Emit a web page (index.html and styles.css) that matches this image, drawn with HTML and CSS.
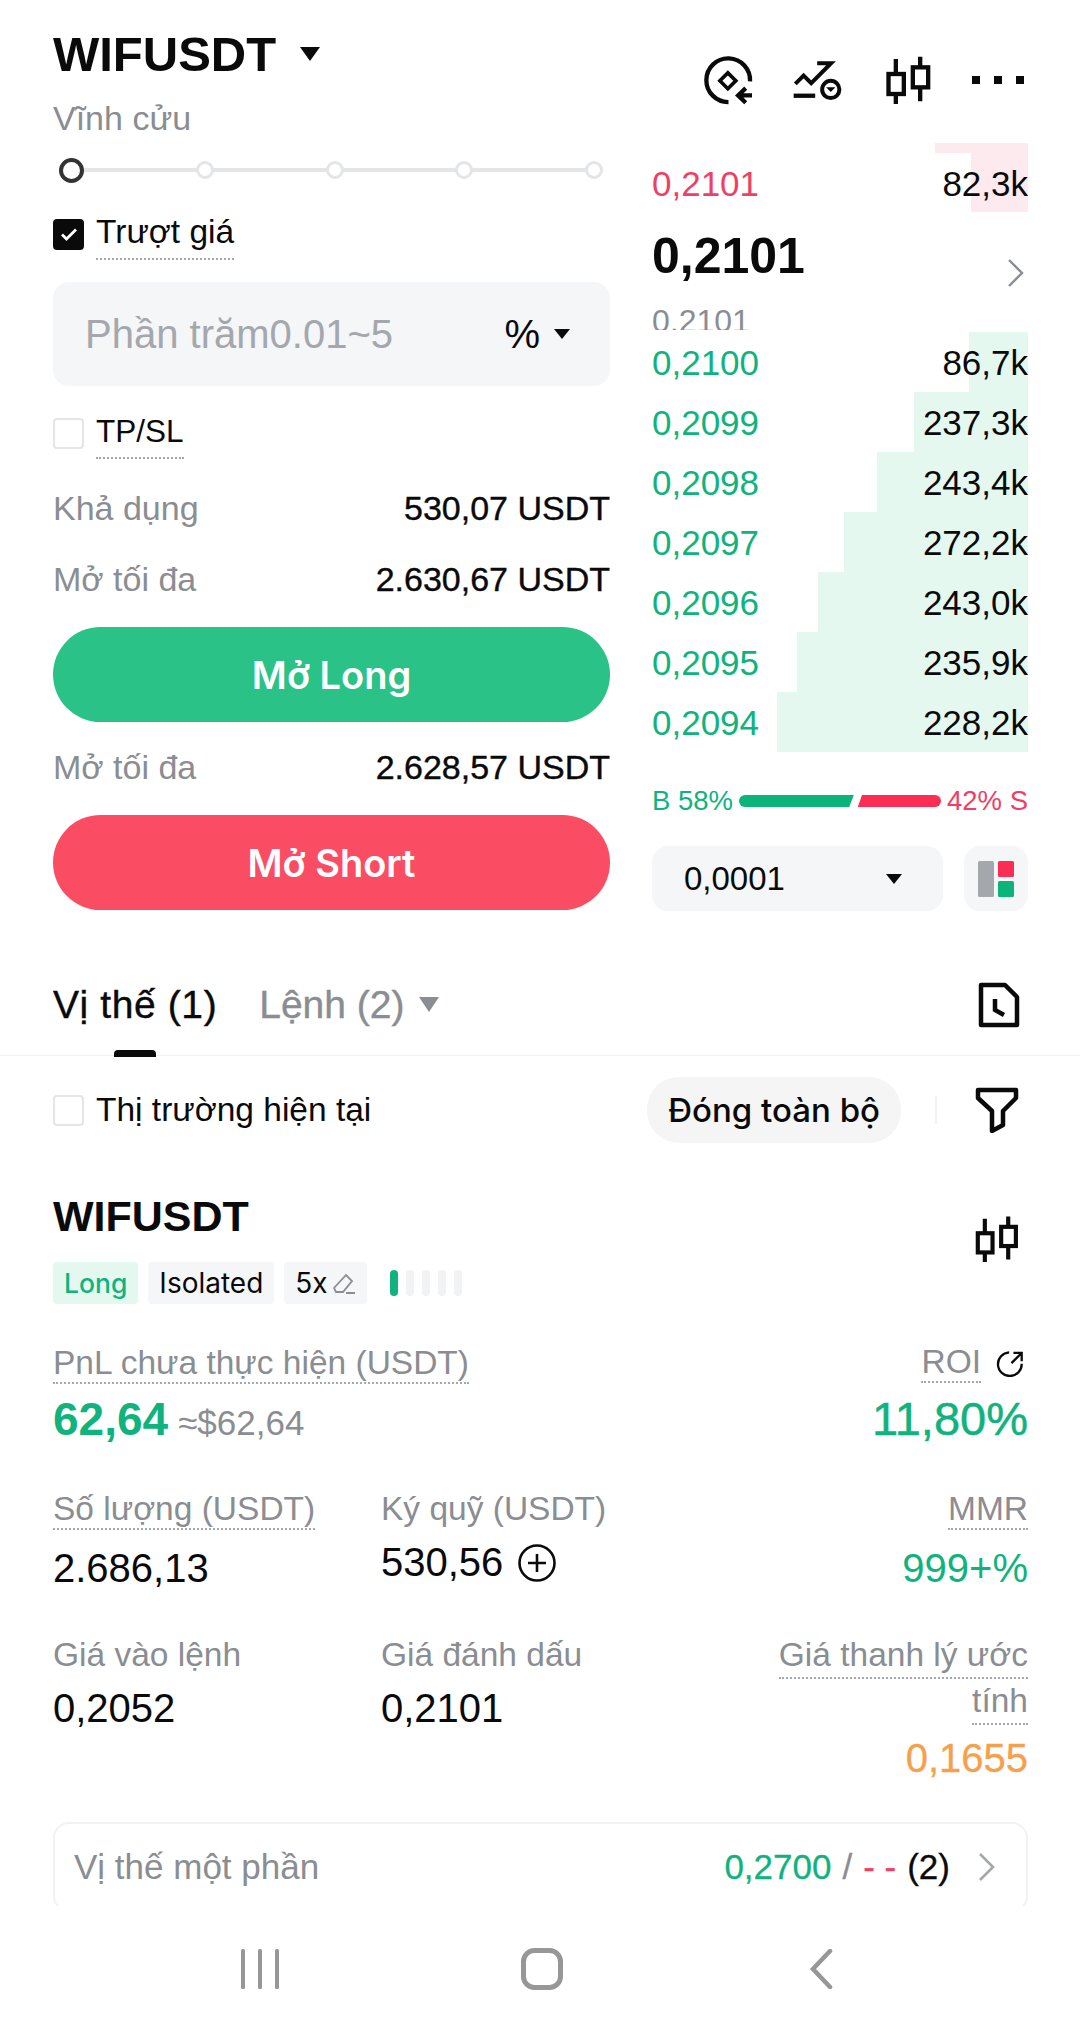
FILE: index.html
```html
<!DOCTYPE html>
<html lang="vi">
<head>
    <meta charset="UTF-8">
    <meta name="viewport" content="width=device-width, initial-scale=1.0">
    <title>WIFUSDT</title>
    <link rel="stylesheet" href="styles.css">
</head>
<body>

<div class="screen">

    <!-- Order form and order book -->
    <div class="trade">
        <div class="form">
            <div class="title-row">
                <span class="title">WIFUSDT</span>
                <span class="caret caret-lg"></span>
            </div>
            <div class="subtitle">Vĩnh cửu</div>

            <div class="slider">
                <span class="knob knob-active"></span>
                <span class="knob"></span>
                <span class="knob"></span>
                <span class="knob"></span>
                <span class="knob"></span>
            </div>

            <div class="check-row check-slip">
                <span class="box box-on">
                    <svg width="18" height="18" viewBox="0 0 18 18"><path d="M2 9.5l4.5 4.5L16 4.5" fill="none" stroke="#fff" stroke-width="2.8"/></svg>
                </span>
                <span class="dotted">Trượt giá</span>
            </div>

            <div class="input">
                <span class="placeholder">Phần trăm0.01~5</span>
                <span class="unit">%</span>
                <span class="caret caret-sm"></span>
            </div>

            <div class="check-row check-tp">
                <span class="box"></span>
                <span class="dotted tp">TP/SL</span>
            </div>

            <div class="info info-first"><span>Khả dụng</span><b>530,07 USDT</b></div>
            <div class="info info-second"><span>Mở tối đa</span><b>2.630,67 USDT</b></div>
            <div class="action action-long">Mở Long</div>
            <div class="info info-third"><span>Mở tối đa</span><b>2.628,57 USDT</b></div>
            <div class="action action-short">Mở Short</div>
        </div>

        <div class="book">
            <div class="tools">
                <svg class="tool" width="57" height="53" viewBox="210 160 170 160" fill="none" stroke="#0a0a0a" stroke-width="13">
                    <path d="M360 243A66 66 0 1 0 295 305"/>
                    <path d="M293 217l24 24-24 24-24-24z" stroke-width="11"/>
                    <path d="M366 285H328M347 263l-23 22 23 22"/>
                </svg>
                <svg class="tool" width="57" height="53" viewBox="485 160 170 160" fill="none" stroke="#0a0a0a" stroke-width="12">
                    <path d="M497 250l25-25 23 23 60-60H563"/>
                    <path d="M492 286h65" stroke-width="13"/>
                    <circle cx="604" cy="267" r="26"/>
                    <path d="M590 260h28l-14 15z" fill="#0a0a0a" stroke="none"/>
                </svg>
                <svg class="tool" width="47" height="50" viewBox="765 165 140 150" fill="none" stroke="#0a0a0a" stroke-width="13">
                    <path d="M797 177v135M870 170v134"/>
                    <rect x="775" y="222" width="46" height="60" fill="#fff"/>
                    <rect x="848" y="202" width="46" height="60" fill="#fff"/>
                </svg>
                <span class="dots"><i></i><i></i><i></i></span>
            </div>

            <div class="asks">
                <span class="ask-cap"></span>
                <div class="row row-ask">
                    <span class="depth depth-ask" style="width:57px"></span>
                    <span class="price ask">0,2101</span><span class="qty">82,3k</span>
                </div>
            </div>

            <div class="last">
                <span class="last-price">0,2101</span>
                <svg width="18" height="30" viewBox="0 0 18 30"><path d="M2 2l13 13L2 28" fill="none" stroke="#8a8d91" stroke-width="2.4"/></svg>
            </div>
            <div class="mark"><span>0,2101</span></div>

            <div class="bids">
                <div class="row"><span class="depth depth-bid" style="width:59px"></span><span class="price bid">0,2100</span><span class="qty">86,7k</span></div>
                <div class="row"><span class="depth depth-bid" style="width:114px"></span><span class="price bid">0,2099</span><span class="qty">237,3k</span></div>
                <div class="row"><span class="depth depth-bid" style="width:151px"></span><span class="price bid">0,2098</span><span class="qty">243,4k</span></div>
                <div class="row"><span class="depth depth-bid" style="width:184px"></span><span class="price bid">0,2097</span><span class="qty">272,2k</span></div>
                <div class="row"><span class="depth depth-bid" style="width:210px"></span><span class="price bid">0,2096</span><span class="qty">243,0k</span></div>
                <div class="row"><span class="depth depth-bid" style="width:231px"></span><span class="price bid">0,2095</span><span class="qty">235,9k</span></div>
                <div class="row"><span class="depth depth-bid" style="width:251px"></span><span class="price bid">0,2094</span><span class="qty">228,2k</span></div>
            </div>

            <div class="ratio">
                <span class="bid">B 58%</span>
                <span class="ratio-bar"><i class="ratio-buy"></i><i class="ratio-sell"></i></span>
                <span class="ask">42% S</span>
            </div>

            <div class="book-controls">
                <div class="step"><span>0,0001</span><span class="caret caret-sm"></span></div>
                <div class="layout-btn">
                    <svg width="36" height="36" viewBox="0 0 36 36">
                        <rect x="0" y="0" width="16" height="36" rx="1.5" fill="#a4a7ab"/>
                        <rect x="20" y="0" width="16" height="16" rx="1.5" fill="#fb2d55"/>
                        <rect x="20" y="20" width="16" height="16" rx="1.5" fill="#0bb57a"/>
                    </svg>
                </div>
            </div>
        </div>
    </div>

    <!-- Tabs -->
    <div class="tabs">
        <span class="tab tab-active">Vị thế (1)</span>
        <span class="tab">Lệnh (2)</span>
        <span class="caret caret-tab"></span>
        <svg class="tab-icon" width="42" height="46" viewBox="0 0 42 46" fill="none" stroke="#0a0a0a" stroke-width="4.5">
            <path d="M3 3h24l12 12v28H3z" stroke-linejoin="round"/>
            <path d="M17 17v11l9 5"/>
        </svg>
    </div>

    <!-- Position filter -->
    <div class="filter">
        <div class="check-row">
            <span class="box"></span>
            <span class="filter-label">Thị trường hiện tại</span>
        </div>
        <div class="filter-right">
            <span class="close-all">Đóng toàn bộ</span>
            <span class="divider"></span>
            <svg width="44" height="46" viewBox="0 0 44 46" fill="none" stroke="#0a0a0a" stroke-width="4.5" stroke-linejoin="round">
                <path d="M3 3h38v8L28 24v14l-11 6V24L3 11z"/>
            </svg>
        </div>
    </div>

    <!-- Position -->
    <div class="position">
        <div class="pos-head">
            <div class="pos-name">WIFUSDT</div>
            <svg width="46" height="48" viewBox="765 165 140 150" fill="none" stroke="#0a0a0a" stroke-width="13">
                <path d="M797 177v135M870 170v134"/>
                <rect x="775" y="222" width="46" height="60" fill="#fff"/>
                <rect x="848" y="202" width="46" height="60" fill="#fff"/>
            </svg>
        </div>

        <div class="tags">
            <span class="tag tag-long">Long</span>
            <span class="tag">Isolated</span>
            <span class="tag">5x
                <svg width="24" height="24" viewBox="0 0 24 24" fill="none" stroke="#8a8d91" stroke-width="1.8"><path d="M2 17L14 4l6 6-9 11H4zM14 22h9"/></svg>
            </span>
            <span class="adl"><i class="adl-on"></i><i></i><i></i><i></i><i></i></span>
        </div>

        <div class="stats stats-pnl">
            <div>
                <span class="label dotted-gray">PnL chưa thực hiện (USDT)</span>
                <div class="pnl"><span class="pnl-value">62,64</span><span class="pnl-usd">≈$62,64</span></div>
            </div>
            <div class="right">
                <div class="roi">
                    <span class="label dotted-gray">ROI</span>
                    <svg width="28" height="28" viewBox="345 55 85 85" fill="none" stroke="#0a0a0a" stroke-width="7"><path d="M385 65A36 36 0 1 0 423 100M392 98l30-30M398 67h25v25"/></svg>
                </div>
                <div class="big bid">11,80%</div>
            </div>
        </div>

        <div class="stats stats-grid">
            <div>
                <span class="label dotted-gray">Số lượng (USDT)</span>
                <div class="value">2.686,13</div>
            </div>
            <div>
                <span class="label">Ký quỹ (USDT)</span>
                <div class="value margin-value">530,56
                    <svg width="40" height="40" viewBox="0 0 40 40" fill="none" stroke="#0a0a0a" stroke-width="2.6"><circle cx="20" cy="20" r="17.5"/><path d="M20 11v18M11 20h18"/></svg>
                </div>
            </div>
            <div class="right">
                <span class="label dotted-gray">MMR</span>
                <div class="value bid">999+%</div>
            </div>
        </div>

        <div class="stats stats-grid stats-last">
            <div>
                <span class="label">Giá vào lệnh</span>
                <div class="value">0,2052</div>
            </div>
            <div>
                <span class="label">Giá đánh dấu</span>
                <div class="value">0,2101</div>
            </div>
            <div class="right">
                <span class="label dotted-gray">Giá thanh lý ước</span><br>
                <span class="label dotted-gray">tính</span>
                <div class="value orange">0,1655</div>
            </div>
        </div>

        <div class="partial">
            <span class="partial-label">Vị thế một phần</span>
            <span class="partial-right">
                <span class="bid">0,2700</span> <span class="slash">/</span> <span class="ask">- -</span> <span class="count">(2)</span>
                <svg width="18" height="30" viewBox="0 0 18 30"><path d="M2 2l13 13L2 28" fill="none" stroke="#a4a7ab" stroke-width="2.6"/></svg>
            </span>
        </div>
    </div>
</div>

<!-- Android navigation bar -->
<div class="navbar">
    <svg width="40" height="40" viewBox="0 0 40 40" fill="#979797"><rect x="1" y="0" width="4" height="40" rx="1.5"/><rect x="18" y="0" width="4" height="40" rx="1.5"/><rect x="35" y="0" width="4" height="40" rx="1.5"/></svg>
    <svg class="nav-home" width="42" height="42" viewBox="0 0 42 42" fill="none" stroke="#979797" stroke-width="5"><rect x="2.5" y="2.5" width="37" height="37" rx="11"/></svg>
    <svg width="24" height="40" viewBox="0 0 24 40" fill="none" stroke="#979797" stroke-width="4.5" stroke-linecap="round"><path d="M21 2L4 20l17 18"/></svg>
</div>

</body>
</html>
```

FILE: styles.css
```css
* {
    box-sizing: border-box;
}

body {
    margin: 0;
    width: 1080px;
    height: 2031px;
    overflow: hidden;
    background-color: #fff;
    color: #0a0a0a;
    font-family: "Liberation Sans", Arial, sans-serif;
    font-size: 34px;
}

.screen {
    height: 1906px;
    overflow: hidden;
}

.bid {
    color: #10b37d;
}

.ask {
    color: #ef3f65;
}

.orange {
    color: #f7a04b;
    -webkit-text-stroke: 0.3px #f7a04b;
}

/* Carets */
.caret {
    display: inline-block;
    width: 0;
    height: 0;
    border-style: solid;
    border-color: #0a0a0a transparent transparent;
}

.caret-lg {
    border-width: 14px 10px 0;
    margin-left: 24px;
}

.caret-sm {
    border-width: 10px 8px 0;
}

.caret-tab {
    border-width: 15px 10px 0;
    border-top-color: #8a8d91;
    margin-left: -28px;
}

/* Top area */
.trade {
    display: grid;
    grid-template-columns: 557px 376px;
    column-gap: 42px;
    padding: 0 52px 0 53px;
    height: 950px;
}

.title-row {
    display: flex;
    align-items: center;
    height: 56px;
    margin-top: 26px;
}

.title {
    font-size: 49px;
    font-weight: 700;
}

.subtitle {
    margin-top: 16px;
    height: 40px;
    line-height: 40px;
    color: #8a8d91;
}

.slider {
    display: flex;
    justify-content: space-between;
    align-items: center;
    height: 26px;
    margin: 19px 7px 0 6px;
    background: linear-gradient(#e4e5e7, #e4e5e7) center / 100% 4px no-repeat;
}

.knob {
    width: 18px;
    height: 18px;
    border: 3px solid #e4e5e7;
    border-radius: 50%;
    background-color: #fff;
}

.knob-active {
    width: 25px;
    height: 25px;
    border: 4px solid #333;
}

.check-row {
    display: flex;
    align-items: center;
    gap: 12px;
}

.box {
    display: flex;
    align-items: center;
    justify-content: center;
    width: 31px;
    height: 31px;
    border: 2px solid #e4e5e7;
    border-radius: 4px;
}

.box-on {
    background-color: #0a0a0a;
    border-color: #0a0a0a;
}

.dotted {
    border-bottom: 2px dotted #a4a7ab;
    padding-bottom: 7px;
    margin-top: 5px;
    font-size: 33.5px;
}

.dotted.tp {
    font-size: 31.5px;
}

.filter-label {
    font-size: 33.5px;
}

.check-slip {
    margin-top: 25px;
    height: 52px;
}

.input {
    display: flex;
    align-items: center;
    height: 104px;
    margin-top: 22px;
    padding: 0 40px 0 32px;
    border-radius: 16px;
    background-color: #f4f6f8;
}

.placeholder {
    flex: 1;
    font-size: 40px;
    color: #a4a7ab;
}

.unit {
    font-size: 40px;
    margin-right: 14px;
}

.check-tp {
    margin-top: 21px;
    height: 52px;
}

.info {
    display: flex;
    justify-content: space-between;
    align-items: center;
    height: 40px;
    color: #8a8d91;
}

.info b {
    color: #0a0a0a;
    font-weight: 400;
    -webkit-text-stroke: 0.4px #0a0a0a;
}

.info-first {
    margin-top: 29px;
}

.info-second {
    margin-top: 31px;
}

.info-third {
    margin-top: 25px;
}

.action {
    display: flex;
    align-items: center;
    justify-content: center;
    height: 95px;
    border-radius: 48px;
    color: #fff;
    font-family: Inter, sans-serif;
    font-size: 38px;
    font-weight: 600;
}

.action-long {
    margin-top: 28px;
    background-color: #2bc287;
}

.action-short {
    margin-top: 28px;
    background-color: #fa4d63;
}

/* Order book */
.tools {
    display: flex;
    align-items: center;
    height: 56px;
    margin-top: 52px;
    margin-left: 48px;
}

.tool {
    flex: none;
}

.tools .tool:nth-child(2) {
    margin-left: 34px;
}

.tools .tool:nth-child(3) {
    margin-left: 37px;
}

.dots {
    display: flex;
    gap: 14px;
    margin-left: 40px;
}

.dots i {
    width: 8px;
    height: 8px;
    background-color: #0a0a0a;
}

.asks {
    position: relative;
    height: 69px;
    margin-top: 35px;
}

.ask-cap {
    position: absolute;
    top: 0;
    right: 0;
    width: 93px;
    height: 10px;
    background-color: #fdeaee;
}

.row {
    position: relative;
    display: flex;
    justify-content: space-between;
    align-items: center;
    height: 60px;
    padding-top: 2px;
    font-size: 35px;
}

.row-ask {
    position: absolute;
    left: 0;
    right: 0;
    bottom: 0;
    height: 59px;
}

.price,
.qty {
    position: relative;
}

.depth {
    position: absolute;
    top: 0;
    right: 0;
    bottom: 0;
}

.depth-ask {
    background-color: #fdeaee;
}

.depth-bid {
    background-color: #e4f8f0;
}

.last {
    display: flex;
    justify-content: space-between;
    align-items: center;
    height: 84px;
    margin-top: 2px;
    padding-right: 3px;
}

.last-price {
    font-size: 50px;
    font-weight: 700;
}

.last svg {
    margin-top: 34px;
}

.mark {
    height: 32px;
    margin-bottom: 2px;
    overflow: hidden;
    color: #8a8d91;
    font-size: 32px;
    line-height: 36px;
}

.mark span {
    display: block;
    margin-top: 5px;
}

.ratio {
    display: flex;
    align-items: center;
    justify-content: space-between;
    height: 36px;
    margin-top: 31px;
    font-size: 27.5px;
}

.ratio-bar {
    display: flex;
    gap: 4px;
    margin: 0 6px;
    flex: 1;
    height: 12px;
}

.ratio-buy {
    flex: 58;
    border-radius: 6px 0 0 6px;
    background-color: #0bb57a;
    clip-path: polygon(0 0, 100% 0, 96% 100%, 0 100%);
}

.ratio-sell {
    flex: 42;
    border-radius: 0 6px 6px 0;
    background-color: #fb2d55;
    clip-path: polygon(5% 0, 100% 0, 100% 100%, 0 100%);
}

.book-controls {
    display: flex;
    justify-content: space-between;
    height: 65px;
    margin-top: 27px;
}

.step {
    display: flex;
    justify-content: space-between;
    align-items: center;
    width: 291px;
    padding: 0 41px 0 32px;
    border-radius: 16px;
    background-color: #f4f6f8;
    font-size: 33px;
}

.layout-btn {
    display: flex;
    align-items: center;
    justify-content: center;
    width: 64px;
    border-radius: 16px;
    background-color: #f4f6f8;
}

/* Tabs */
.tabs {
    display: flex;
    align-items: center;
    gap: 42px;
    height: 106px;
    padding: 4px 60px 0 53px;
    border-bottom: 1px solid #f1f2f3;
    font-size: 39px;
    color: #8a8d91;
}

.tab {
    position: relative;
    -webkit-text-stroke: 0.4px #8a8d91;
}

.tab-active {
    color: #0a0a0a;
    -webkit-text-stroke: 0.4px #0a0a0a;
    letter-spacing: 0.6px;
}

.tab-active::after {
    content: "";
    position: absolute;
    left: 61px;
    bottom: -30px;
    width: 42px;
    height: 7px;
    border-radius: 4px 4px 0 0;
    background-color: #0a0a0a;
}

.tab-icon {
    margin-left: auto;
}

/* Filter row */
.filter {
    display: flex;
    justify-content: space-between;
    align-items: center;
    height: 108px;
    padding: 0 61px 0 53px;
}

.filter-right {
    display: flex;
    align-items: center;
}

.close-all {
    padding: 13px 21px;
    border-radius: 32px;
    background-color: #f5f5f5;
    font-family: Inter, sans-serif;
    font-size: 33px;
    font-weight: 500;
}

.divider {
    width: 2px;
    height: 28px;
    margin: 0 38px 0 34px;
    background-color: #f1f2f3;
}

/* Position */
.position {
    padding: 0 52px 0 53px;
}

.pos-head {
    display: flex;
    justify-content: space-between;
    align-items: center;
    margin-top: 24px;
    height: 56px;
}

.pos-head svg {
    margin: 46px 8px 0 0;
}

.pos-name {
    font-size: 43px;
    font-weight: 700;
}

.tags {
    display: flex;
    align-items: center;
    gap: 10px;
    height: 42px;
    margin-top: 18px;
    font-family: Inter, sans-serif;
}

.tag {
    display: flex;
    align-items: center;
    gap: 4px;
    height: 42px;
    padding: 0 11px;
    border-radius: 4px;
    background-color: #f4f6f8;
    font-size: 28px;
}

.tag-long {
    background-color: #e4f8f0;
    color: #10b37d;
    font-size: 26.5px;
    font-weight: 500;
}

.adl {
    display: flex;
    gap: 8px;
    margin-left: 13px;
}

.adl i {
    width: 8px;
    height: 26px;
    border-radius: 4px;
    background-color: #f1f2f3;
}

.adl .adl-on {
    background-color: #10b37d;
}

.stats {
    margin-top: 43px;
}

.stats-pnl {
    display: flex;
    justify-content: space-between;
    margin-top: 39px;
}

.stats-last {
    margin-top: 42px;
}

.stats-grid {
    display: grid;
    grid-template-columns: 328px 1fr 1fr;
}

.label {
    display: inline-block;
    line-height: 38px;
    color: #8a8d91;
    font-size: 33.5px;
}

.dotted-gray {
    border-bottom: 2px dotted #a4a7ab;
}

.right {
    text-align: right;
}

.roi {
    display: flex;
    justify-content: flex-end;
    align-items: center;
    gap: 15px;
    padding-right: 4px;
}

.pnl {
    display: flex;
    align-items: baseline;
    gap: 10px;
    margin-top: 8px;
}

.pnl-value {
    color: #10b37d;
    font-size: 46px;
    font-weight: 700;
}

.pnl-usd {
    color: #8a8d91;
    font-size: 35px;
}

.big {
    margin-top: 8px;
    font-size: 47px;
    -webkit-text-stroke: 0.5px #10b37d;
}

.value {
    margin-top: 16px;
    font-size: 40px;
}

.margin-value {
    display: flex;
    align-items: center;
    gap: 14px;
    margin-top: 12px;
}

.stats-last .label {
    line-height: 44px;
}

.stats-last .value {
    margin-top: 9px;
}

.stats-last .right .value {
    margin-top: 11px;
}

.partial {
    display: flex;
    justify-content: space-between;
    align-items: center;
    height: 90px;
    margin-top: 41px;
    padding: 0 30px 0 19px;
    border: 2px solid #f1f2f3;
    border-radius: 16px;
}

.partial-label {
    color: #8a8d91;
    font-size: 35px;
}

.partial-right {
    display: flex;
    align-items: center;
    gap: 11px;
    font-size: 35px;
}

.partial-right span {
    -webkit-text-stroke: 0.3px currentColor;
}

.slash {
    color: #8a8d91;
}

.partial-right svg {
    margin-left: 17px;
}

/* Android nav */
.navbar {
    display: flex;
    justify-content: space-between;
    align-items: center;
    height: 125px;
    padding: 0 247px 0 240px;
}

.nav-home {
    margin-right: 6px;
}
```
